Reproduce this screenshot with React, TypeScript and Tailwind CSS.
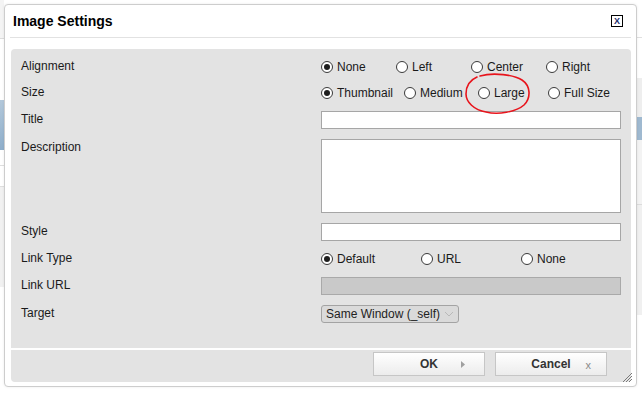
import React from "react"

const font = "font-['Liberation_Sans',Arial,sans-serif]"

function Radio({ label, checked, className }: { label: string; checked?: boolean; className?: string }) {
  return (
    <label className={"flex h-[18px] shrink-0 items-center gap-[4px] " + (className ?? "")}>
      <span className="flex h-[12px] w-[12px] items-center justify-center rounded-full border border-[#3a3a3a] bg-white">
        {checked && <span className="h-[6px] w-[6px] rounded-full bg-[#1e1e1e]" />}
      </span>
      <span className="text-[12px] leading-[18px] text-[#1a1a1a]">{label}</span>
    </label>
  )
}

function Row({
  label,
  children,
  className,
  radios,
}: {
  label: string
  children: React.ReactNode
  className?: string
  radios?: boolean
}) {
  return (
    <div className={"flex " + (className ?? "")}>
      <div
        className={
          "w-[300px] text-[12px] text-[#1a1a1a] " + (radios ? "leading-[17px]" : "pt-[1px] leading-[15px]")
        }
      >
        {label}
      </div>
      <div className="flex w-[300px]">{children}</div>
    </div>
  )
}

function Input({ disabled }: { disabled?: boolean }) {
  return (
    <div
      className={
        "h-[18px] w-[300px] border " +
        (disabled ? "border-[#a9a9a9] bg-[#c9c9c9]" : "border-[#a6a6a6] bg-white")
      }
    />
  )
}

function Button({ label, icon }: { label: string; icon: React.ReactNode }) {
  return (
    <button className="relative flex h-[24px] w-[112px] items-center justify-center border border-[#c6c6c6] bg-gradient-to-b from-white to-[#ececec] text-[12px] font-bold text-[#333]">
      {label}
      {icon}
    </button>
  )
}

export default function App() {
  return (
    <div className={"relative flex h-[393px] w-[642px] overflow-hidden bg-white " + font}>
      {/* page behind the dialog */}
      <div className="flex w-[4px] flex-col">
        <div className="h-[38px] bg-[#f4f4f4]" />
        <div className="h-[1px] bg-[#dcdcdc]" />
        <div className="h-[61px] bg-white" />
        <div className="h-[50px] bg-gradient-to-b from-[#b3c8da] to-[#8eaecb]" />
        <div className="h-[15px] bg-white" />
        <div className="h-[1px] bg-[#dedede]" />
        <div className="h-[20px] bg-white" />
        <div className="h-[1px] bg-[#dedede]" />
        <div className="h-[100px] bg-[#f1f1f1]" />
        <div className="flex-1 bg-white" />
      </div>

      <div className="flex w-[633px] flex-col pt-[4px] pb-[6px]">
        <div className="relative flex flex-1 flex-col rounded-[4px] border border-[#cdcdcd] bg-white shadow-[0_0_3px_rgba(0,0,0,0.08)]">
          <div className="flex h-[32px] items-center justify-between pl-[8px] pr-[13px]">
            <span className="text-[14px] font-bold text-black">Image Settings</span>
            <span className="flex h-[12px] w-[12px] items-center justify-center border border-black text-[9px] font-bold leading-none text-[#1a2a6a]">
              X
            </span>
          </div>
          <div className="mx-[5px] h-px bg-[#e2e2e2]" />

          <div className="mt-[11px] mb-[4px] ml-[6px] mr-[5px] flex flex-1 flex-col rounded-[4px] bg-[#e3e3e3]">
            <div className="flex flex-col pt-[9px] pl-[10px]">
              <Row label="Alignment" radios>
                <Radio label="None" checked className="w-[75px]" />
                <Radio label="Left" className="w-[75px]" />
                <Radio label="Center" className="w-[75px]" />
                <Radio label="Right" />
              </Row>
              <Row label="Size" radios className="mt-[8px]">
                <Radio label="Thumbnail" checked className="w-[83px]" />
                <Radio label="Medium" className="w-[74px]" />
                <Radio label="Large" className="w-[70px]" />
                <Radio label="Full Size" />
              </Row>
              <Row label="Title" className="mt-[9px]">
                <Input />
              </Row>
              <Row label="Description" className="mt-[10px]">
                <div className="h-[74px] w-[300px] border border-[#a6a6a6] bg-white" />
              </Row>
              <Row label="Style" className="mt-[10px]">
                <Input />
              </Row>
              <Row label="Link Type" radios className="mt-[9px]">
                <Radio label="Default" checked className="w-[100px]" />
                <Radio label="URL" className="w-[100px]" />
                <Radio label="None" />
              </Row>
              <Row label="Link URL" className="mt-[9px]">
                <Input disabled />
              </Row>
              <Row label="Target" className="mt-[10px]">
                <div className="flex h-[18px] w-[138px] items-center justify-between rounded-[3px] border border-[#a3a3a3] bg-[#dadada] pl-[4px] pr-[4px]">
                  <span className="text-[12px] leading-none text-[#222]">Same Window (_self)</span>
                  <svg width="10" height="6" viewBox="0 0 10 6" fill="none">
                    <path d="M1 1 L5 5 L9 1" stroke="#b9b9b9" strokeWidth="1" />
                  </svg>
                </div>
              </Row>
            </div>

            <div className="flex-1" />
            <div className="h-[2px] bg-white" />
            <div className="flex h-[32px] justify-end gap-[10px] pt-[2px] pr-[24px]">
              <Button
                label="OK"
                icon={
                  <svg className="absolute right-[19px] top-[8px]" width="4" height="7" viewBox="0 0 4 7">
                    <path d="M0 0 L4 3.5 L0 7 Z" fill="#a0a0a0" />
                  </svg>
                }
              />
              <Button
                label="Cancel"
                icon={
                  <span className="absolute right-[15px] top-[4px] text-[11px] font-normal text-[#8a8a8a]">x</span>
                }
              />
            </div>
          </div>

          <svg className="absolute right-[3px] bottom-[3px]" width="12" height="12" viewBox="0 0 12 12">
            <path d="M11 2 L2 11 M11 5 L5 11 M11 8 L8 11" stroke="#7a7a7a" strokeWidth="1" />
          </svg>
        </div>
      </div>

      <div className="flex w-[5px] flex-col">
        <div className="h-[37px] bg-white" />
        <div className="h-[1px] bg-[#e0e0e0]" />
        <div className="h-[40px] bg-white" />
        <div className="h-[39px] bg-[#eeeeee]" />
        <div className="h-[23px] bg-[#9fb9d0]" />
        <div className="h-[64px] bg-[#f3f3f3]" />
        <div className="h-[1px] bg-[#dcdcdc]" />
        <div className="h-[110px] bg-[#f0f0f0]" />
        <div className="flex-1 bg-white" />
      </div>

      {/* red hand-drawn annotation around "Large" */}
      <svg className="pointer-events-none absolute left-0 top-0" width="642" height="393" viewBox="0 0 642 393" fill="none">
        <path
          d="M480 76 C494 72 514 75 522 80 C531 86 531 98 524 105 C516 112 498 115 486 112 C474 110 466 102 466 94 C466 86 470 80 477 77"
          stroke="#e8141c"
          strokeWidth="1.6"
          strokeLinecap="round"
        />
      </svg>
    </div>
  )
}
